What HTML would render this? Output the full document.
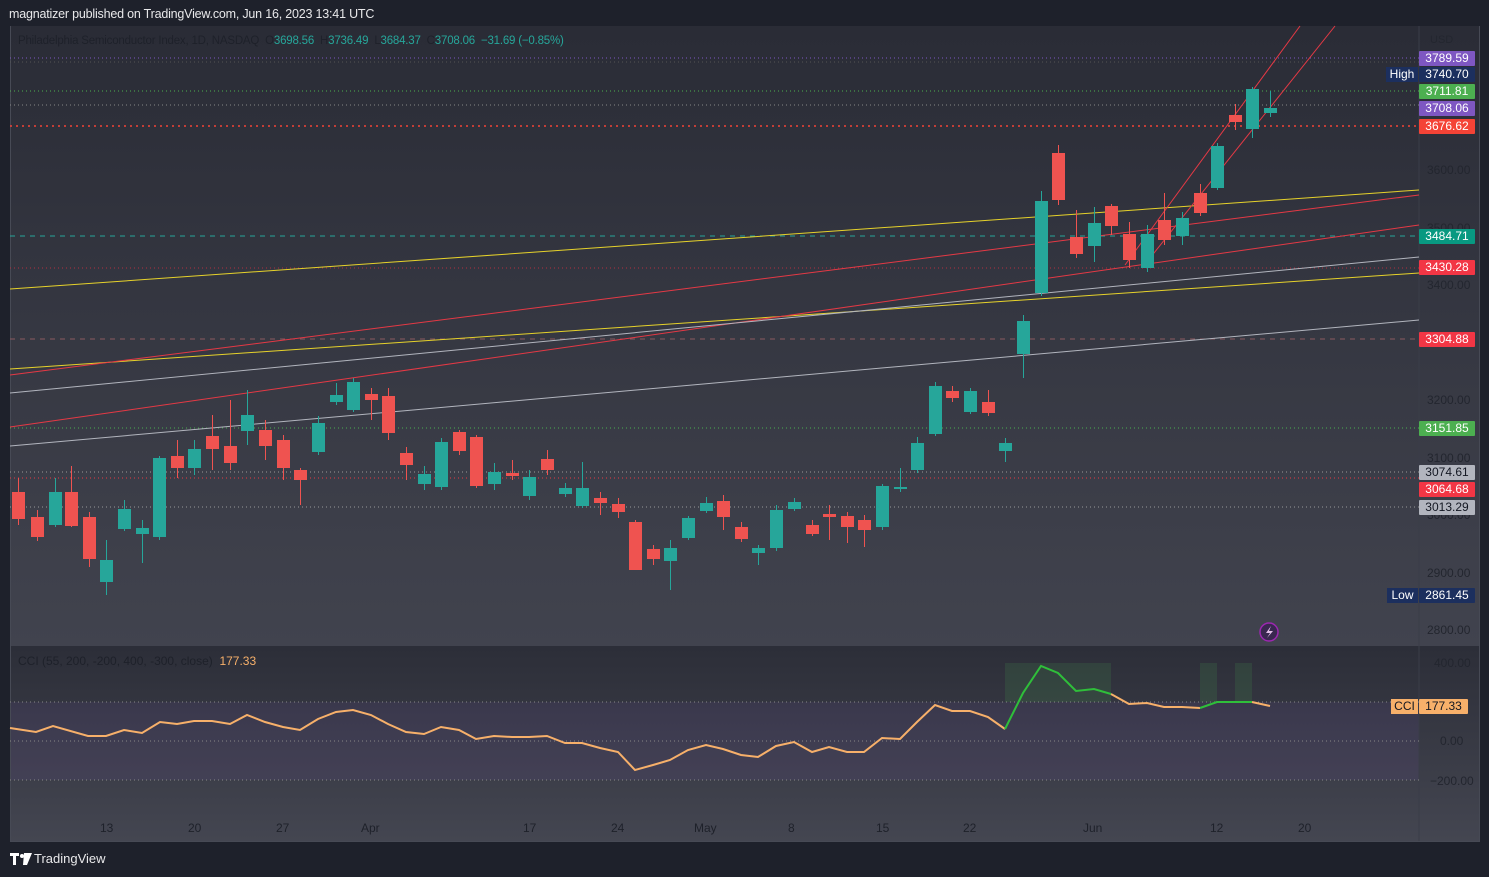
<!DOCTYPE html>
<html><head><meta charset="utf-8"><style>
body{margin:0;width:1489px;height:877px;background:#1e212b;overflow:hidden;font-family:"Liberation Sans",sans-serif;position:relative}
.t{position:absolute;white-space:nowrap}
.lb{position:absolute;left:1419px;width:56px;height:15px;font-size:12px;line-height:15px;text-align:center;color:#fff;border-radius:1px}
.ax{position:absolute;left:1427px;font-size:12px;color:#23262f}
</style></head><body>
<div class="t" style="left:9px;top:7px;font-size:12.5px;color:#e8e8ea;letter-spacing:-0.2px">magnatizer published on TradingView.com, Jun 16, 2023 13:41 UTC</div>
<svg style="position:absolute;left:0;top:0" width="1489" height="877">
<defs>
<linearGradient id="g1" x1="0" y1="0" x2="0" y2="1"><stop offset="0" stop-color="#2a2c36"/><stop offset="1" stop-color="#41434e"/></linearGradient>
<linearGradient id="g2" x1="0" y1="0" x2="0" y2="1"><stop offset="0" stop-color="#2c2e38"/><stop offset="1" stop-color="#444651"/></linearGradient>
</defs>
<rect x="10" y="26" width="1470" height="620" fill="url(#g1)"/>
<rect x="10" y="646" width="1470" height="196" fill="url(#g2)"/>
<rect x="10" y="702" width="1409" height="78" fill="rgba(126,87,194,0.1)"/>
<line x1="1419" y1="26" x2="1419" y2="842" stroke="#3a3d48"/>
<rect x="1479" y="26" width="1" height="816" fill="#474a55"/>
<rect x="10" y="841" width="1470" height="1" fill="#474a55"/>
<rect x="10" y="26" width="1" height="816" fill="#474a55"/>
<g stroke-width="1" fill="none">
<line x1="10" y1="62" x2="1419" y2="62" stroke="#555" stroke-dasharray="1 3"/>
<line x1="10" y1="58" x2="1419" y2="58" stroke="#7e57c2" stroke-dasharray="1 3"/>
<line x1="10" y1="105" x2="1419" y2="105" stroke="#888" stroke-dasharray="1 3"/>
<line x1="10" y1="91" x2="1419" y2="91" stroke="#4caf50" stroke-dasharray="1 3"/>
<line x1="10" y1="126" x2="1419" y2="126" stroke="#f44336" stroke-dasharray="2 4" stroke-width="1.5"/>
<line x1="10" y1="236" x2="1419" y2="236" stroke="#26a69a" stroke-dasharray="5 5"/>
<line x1="10" y1="268" x2="1419" y2="268" stroke="#b03040" stroke-dasharray="1 3"/>
<line x1="10" y1="339" x2="1419" y2="339" stroke="#8a5a60" stroke-dasharray="5 5"/>
<line x1="10" y1="428" x2="1419" y2="428" stroke="#4caf50" stroke-dasharray="1 3"/>
<line x1="10" y1="472" x2="1419" y2="472" stroke="#999" stroke-dasharray="1 3"/>
<line x1="10" y1="478" x2="1419" y2="478" stroke="#e53945" stroke-dasharray="1 3"/>
<line x1="10" y1="507" x2="1419" y2="507" stroke="#999" stroke-dasharray="1 3"/>
<line x1="10" y1="289" x2="1419" y2="190" stroke="#e6d22b"/>
<line x1="10" y1="369" x2="1419" y2="273" stroke="#e6d22b"/>
<line x1="10" y1="375" x2="1419" y2="195" stroke="#e53945"/>
<line x1="10" y1="427" x2="1419" y2="225" stroke="#e53945"/>
<line x1="10" y1="393" x2="1419" y2="257" stroke="#b2b5be"/>
<line x1="10" y1="446" x2="1419" y2="320" stroke="#b2b5be"/>
<line x1="1125" y1="265" x2="1300" y2="26" stroke="#e53945"/>
<line x1="1150" y1="258" x2="1335" y2="26" stroke="#e53945"/>
<line x1="10" y1="702" x2="1419" y2="702" stroke="#888" stroke-dasharray="1 3"/>
<line x1="10" y1="741" x2="1419" y2="741" stroke="#888" stroke-dasharray="1 3"/>
<line x1="10" y1="780" x2="1419" y2="780" stroke="#888" stroke-dasharray="1 3"/>
</g>
<g fill="rgba(76,175,80,0.15)">
<rect x="1005" y="663" width="106" height="39"/><rect x="1200" y="663" width="17" height="39"/><rect x="1235" y="663" width="17" height="39"/>
</g>
<polyline fill="none" stroke="#f7b06a" stroke-width="2" points="10,728 36,732 53,726 88,736 106,736 124,730 142,733 160,722 177,724 194,721 212,721 230,724 247,715 265,722 283,727 300,730 318,719 336,712 353,710 371,715 388,724 406,732 424,734 441,727 459,730 476,739 494,736 512,737 529,737 547,736 565,743 582,743 600,748 618,752 635,770 653,765 670,760 688,750 706,745 723,749 741,755 758,757 776,746 794,742 812,752 829,747 847,752 864,752 882,738 900,739 917,722 935,705 952,711 970,711 988,717 1005,729"/>
<polyline fill="none" stroke="#2fbf3a" stroke-width="2" points="1005,729 1023,693 1041,666 1058,673 1076,691 1094,689 1111,694"/>
<polyline fill="none" stroke="#f7b06a" stroke-width="2" points="1111,694 1129,704 1147,703 1164,707 1182,707 1200,708"/>
<polyline fill="none" stroke="#2fbf3a" stroke-width="2" points="1200,708 1217,702 1235,702 1252,702"/>
<polyline fill="none" stroke="#f7b06a" stroke-width="2" points="1252,702 1270,706"/>
<circle cx="1269" cy="632" r="9" fill="#3a2750" stroke="#9c27b0" stroke-width="1.5"/>
<path d="M1271 626 L1266 633 L1270 633 L1267 638 L1273 631 L1269 631 Z" fill="#e1bee7"/>
<g fill="#fff"><path d="M10 853h9v3h-3v9h-3v-9h-3z"/><circle cx="22" cy="856" r="2"/><path d="M24 853h8l-5 12h-4z"/></g>
</svg>
<svg style="position:absolute;left:0;top:0" width="1489" height="877" id="cs"></svg>
<script>
var d=[[18,492,519,478,525,0],[37,517,537,510,541,0],[55,492,525,478,527,1],[71,492,526,466,527,0],[89,517,559,512,567,0],[106,560,582,540,595,1],[124,509,529,500,531,1],[142,528,534,520,563,1],[159,458,537,456,540,1],[177,456,468,440,478,0],[194,449,468,440,475,1],[212,436,449,415,470,0],[230,446,463,400,470,0],[247,415,431,390,445,1],[265,430,446,420,460,0],[283,440,468,435,480,0],[300,470,480,468,505,0],[318,423,452,416,455,1],[336,395,402,383,405,1],[353,382,410,378,412,1],[371,394,400,388,420,0],[388,396,433,388,440,0],[406,453,465,447,480,0],[424,474,484,466,490,1],[441,442,487,438,490,1],[459,432,451,430,455,0],[476,437,486,435,488,0],[494,472,484,463,490,1],[512,473,476,460,480,0],[529,477,496,470,500,1],[547,459,470,450,475,0],[565,488,494,483,497,1],[582,488,506,462,508,1],[600,498,503,492,515,0],[618,504,512,498,518,0],[635,522,570,520,570,0],[653,549,559,545,565,0],[670,548,561,540,590,1],[688,518,538,516,540,1],[706,503,511,497,513,1],[723,501,517,495,530,0],[741,527,539,522,542,0],[758,548,553,545,565,1],[776,510,548,505,551,1],[794,502,509,498,511,1],[812,525,534,520,536,0],[829,514,517,505,540,0],[847,516,527,512,543,0],[864,520,530,515,547,0],[882,486,527,484,530,1],[900,487,489,468,492,1],[917,443,470,437,473,1],[935,386,434,382,436,1],[952,391,398,386,402,0],[970,391,412,388,414,1],[988,402,413,390,416,0],[1005,443,451,438,462,1],[1023,321,354,315,378,1],[1041,201,293,191,296,1],[1058,153,200,145,205,0],[1076,237,254,210,258,0],[1094,223,246,207,262,1],[1111,206,226,204,235,0],[1129,234,260,222,268,0],[1147,234,268,225,272,1],[1164,220,240,193,245,0],[1182,218,236,212,245,1],[1200,193,213,184,216,0],[1217,146,188,143,190,1],[1235,115,122,104,130,0],[1252,89,129,87,138,1],[1270,108,113,91,117,1]];
var s='';d.forEach(function(c){var col=c[5]?'#26a69a':'#ef5350';s+='<line x1="'+(c[0]+.5)+'" x2="'+(c[0]+.5)+'" y1="'+c[3]+'" y2="'+c[4]+'" stroke="'+col+'"/><rect x="'+(c[0]-6)+'" y="'+c[1]+'" width="13" height="'+Math.max(2,c[2]-c[1])+'" fill="'+col+'"/>';});
document.getElementById('cs').innerHTML=s;
</script>
<div class="t" style="left:18px;top:35px;font-size:11.5px;color:#1e212a;letter-spacing:-0.2px">Philadelphia Semiconductor Index, 1D, NASDAQ &nbsp;O<span style="color:#26a69a">3698.56</span> &nbsp;H<span style="color:#26a69a">3736.49</span> &nbsp;L<span style="color:#26a69a">3684.37</span> &nbsp;C<span style="color:#26a69a">3708.06 &nbsp;−31.69 (−0.85%)</span></div>
<div class="t" style="left:18px;top:654px;font-size:12px;color:#1e212a">CCI (55, 200, -200, 400, -300, close) &nbsp;<span style="color:#f7b06a">177.33</span></div>
<div class="t" style="left:1430px;top:34px;font-size:11px;color:#23262f">USD</div>
<div class="ax" style="top:163px">3600.00</div><div class="ax" style="top:221px">3500.00</div><div class="ax" style="top:278px">3400.00</div>
<div class="ax" style="top:393px">3200.00</div><div class="ax" style="top:451px">3100.00</div><div class="ax" style="top:508px">3000.00</div>
<div class="ax" style="top:566px">2900.00</div><div class="ax" style="top:623px">2800.00</div>
<div class="ax" style="top:656px;left:1434px">400.00</div><div class="ax" style="top:734px;left:1440px">0.00</div><div class="ax" style="top:774px;left:1430px">−200.00</div>
<div class="lb" style="top:51px;background:#7e57c2">3789.59</div>
<div class="lb" style="top:67px;background:#1c2f5e">3740.70</div>
<div class="t" style="left:1386px;top:67px;width:32px;height:15px;background:#1c2f5e;color:#fff;font-size:12px;line-height:15px;text-align:center">High</div>
<div class="lb" style="top:84px;background:#4caf50">3711.81</div>
<div class="lb" style="top:101px;background:#7e57c2">3708.06</div>
<div class="lb" style="top:119px;background:#f44336">3676.62</div>
<div class="lb" style="top:229px;background:#089981">3484.71</div>
<div class="lb" style="top:260px;background:#f23645">3430.28</div>
<div class="lb" style="top:332px;background:#f23645">3304.88</div>
<div class="lb" style="top:421px;background:#4caf50">3151.85</div>
<div class="lb" style="top:465px;background:#b2b5be;color:#131722">3074.61</div>
<div class="lb" style="top:482px;background:#f23645">3064.68</div>
<div class="lb" style="top:500px;background:#b2b5be;color:#131722">3013.29</div>
<div class="lb" style="top:588px;background:#1c2f5e">2861.45</div>
<div class="t" style="left:1387px;top:588px;width:31px;height:15px;background:#1c2f5e;color:#fff;font-size:12px;line-height:15px;text-align:center">Low</div>
<div class="lb" style="top:699px;left:1419px;width:49px;background:#f7b06a;color:#131722">177.33</div>
<div class="t" style="left:1391px;top:699px;width:27px;height:15px;background:#f7b06a;color:#131722;font-size:12px;line-height:15px;text-align:center">CCI</div>
<div class="t" style="top:821px;left:0;font-size:12px;color:#1e212a;width:1419px;height:16px">
<span class="t" style="left:100px">13</span><span class="t" style="left:188px">20</span><span class="t" style="left:276px">27</span><span class="t" style="left:361px">Apr</span><span class="t" style="left:523px">17</span><span class="t" style="left:611px">24</span><span class="t" style="left:694px">May</span><span class="t" style="left:788px">8</span><span class="t" style="left:876px">15</span><span class="t" style="left:963px">22</span><span class="t" style="left:1083px">Jun</span><span class="t" style="left:1210px">12</span><span class="t" style="left:1298px">20</span></div>
<div class="t" style="left:34px;top:851px;font-size:13px;color:#e8e8ea">TradingView</div>
</body></html>
